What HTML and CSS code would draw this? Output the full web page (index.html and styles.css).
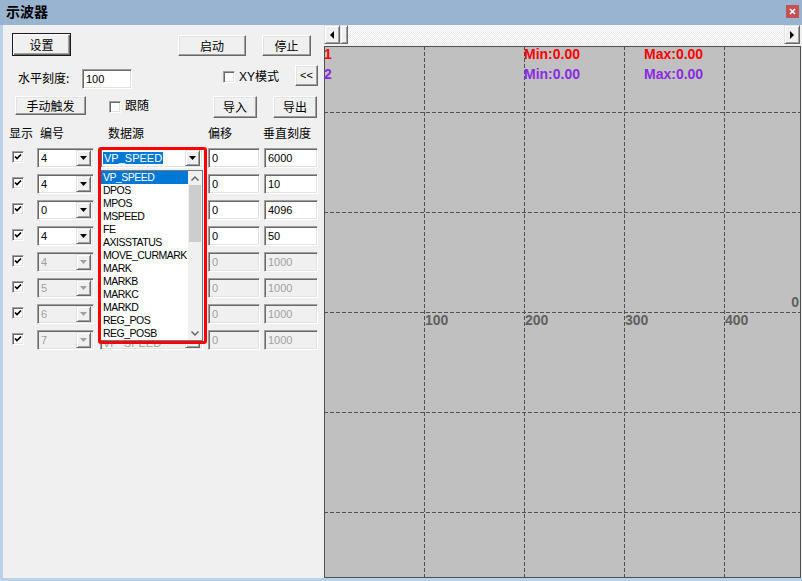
FILE: index.html
```html
<!DOCTYPE html>
<html lang="zh">
<head>
    <meta charset="UTF-8">
    <title>示波器</title>
    <link rel="stylesheet" href="styles.css">
</head>
<body>
<div class="window">
    <div class="titlebar">
        <span class="title">示波器</span>
        <span class="close">
            <svg width="7" height="7" viewBox="0 0 7 7"><path d="M1 1L6 6M6 1L1 6" stroke="#fff" stroke-width="1.6"/></svg>
        </span>
    </div>

    <div class="frame">
        <!-- settings panel -->
        <div class="panel">
            <div class="row-top">
                <button class="btn btn-default btn-set">设置</button>
                <button class="btn btn-start">启动</button>
                <button class="btn btn-stop">停止</button>
            </div>

            <div class="row-scale">
                <span class="lbl-scale">水平刻度:</span>
                <div class="field field-scale">100</div>
                <span class="check check-xy"></span>
                <span class="check-label">XY模式</span>
                <button class="btn btn-back">&lt;&lt;</button>
            </div>

            <div class="row-ctl">
                <button class="btn btn-trigger">手动触发</button>
                <span class="check check-follow"></span>
                <span class="check-label follow-label">跟随</span>
                <button class="btn btn-import">导入</button>
                <button class="btn btn-export">导出</button>
            </div>

            <div class="col-head">
                <span class="h-show">显示</span>
                <span class="h-num">编号</span>
                <span class="h-src">数据源</span>
                <span class="h-off">偏移</span>
                <span>垂直刻度</span>
            </div>

            <div class="channels">
                <div class="channel">
                    <span class="check"><svg viewBox="0 0 8 8"><polyline points="1,3.5 3,5.5 7,1.5"/></svg></span>
                    <div class="combo combo-num"><span class="combo-text">4</span><span class="combo-btn"><svg viewBox="0 0 7 4"><polygon points="0,0 7,0 3.5,4"/></svg></span></div>
                    <div class="combo combo-src"><span class="combo-text"><span class="sel">VP_SPEED</span></span><span class="combo-btn"><svg viewBox="0 0 7 4"><polygon points="0,0 7,0 3.5,4"/></svg></span></div>
                    <div class="field field-off">0</div>
                    <div class="field field-vs">6000</div>
                </div>
                <div class="channel">
                    <span class="check"><svg viewBox="0 0 8 8"><polyline points="1,3.5 3,5.5 7,1.5"/></svg></span>
                    <div class="combo combo-num"><span class="combo-text">4</span><span class="combo-btn"><svg viewBox="0 0 7 4"><polygon points="0,0 7,0 3.5,4"/></svg></span></div>
                    <div class="combo combo-src"><span class="combo-text"></span><span class="combo-btn"><svg viewBox="0 0 7 4"><polygon points="0,0 7,0 3.5,4"/></svg></span></div>
                    <div class="field field-off">0</div>
                    <div class="field field-vs">10</div>
                </div>
                <div class="channel">
                    <span class="check"><svg viewBox="0 0 8 8"><polyline points="1,3.5 3,5.5 7,1.5"/></svg></span>
                    <div class="combo combo-num"><span class="combo-text">0</span><span class="combo-btn"><svg viewBox="0 0 7 4"><polygon points="0,0 7,0 3.5,4"/></svg></span></div>
                    <div class="combo combo-src"><span class="combo-text"></span><span class="combo-btn"><svg viewBox="0 0 7 4"><polygon points="0,0 7,0 3.5,4"/></svg></span></div>
                    <div class="field field-off">0</div>
                    <div class="field field-vs">4096</div>
                </div>
                <div class="channel">
                    <span class="check"><svg viewBox="0 0 8 8"><polyline points="1,3.5 3,5.5 7,1.5"/></svg></span>
                    <div class="combo combo-num"><span class="combo-text">4</span><span class="combo-btn"><svg viewBox="0 0 7 4"><polygon points="0,0 7,0 3.5,4"/></svg></span></div>
                    <div class="combo combo-src"><span class="combo-text"></span><span class="combo-btn"><svg viewBox="0 0 7 4"><polygon points="0,0 7,0 3.5,4"/></svg></span></div>
                    <div class="field field-off">0</div>
                    <div class="field field-vs">50</div>
                </div>
                <div class="channel is-off">
                    <span class="check"><svg viewBox="0 0 8 8"><polyline points="1,3.5 3,5.5 7,1.5"/></svg></span>
                    <div class="combo combo-num"><span class="combo-text">4</span><span class="combo-btn"><svg viewBox="0 0 7 4"><polygon points="0,0 7,0 3.5,4"/></svg></span></div>
                    <div class="combo combo-src"><span class="combo-text"></span><span class="combo-btn"><svg viewBox="0 0 7 4"><polygon points="0,0 7,0 3.5,4"/></svg></span></div>
                    <div class="field field-off">0</div>
                    <div class="field field-vs">1000</div>
                </div>
                <div class="channel is-off">
                    <span class="check"><svg viewBox="0 0 8 8"><polyline points="1,3.5 3,5.5 7,1.5"/></svg></span>
                    <div class="combo combo-num"><span class="combo-text">5</span><span class="combo-btn"><svg viewBox="0 0 7 4"><polygon points="0,0 7,0 3.5,4"/></svg></span></div>
                    <div class="combo combo-src"><span class="combo-text"></span><span class="combo-btn"><svg viewBox="0 0 7 4"><polygon points="0,0 7,0 3.5,4"/></svg></span></div>
                    <div class="field field-off">0</div>
                    <div class="field field-vs">1000</div>
                </div>
                <div class="channel is-off">
                    <span class="check"><svg viewBox="0 0 8 8"><polyline points="1,3.5 3,5.5 7,1.5"/></svg></span>
                    <div class="combo combo-num"><span class="combo-text">6</span><span class="combo-btn"><svg viewBox="0 0 7 4"><polygon points="0,0 7,0 3.5,4"/></svg></span></div>
                    <div class="combo combo-src"><span class="combo-text"></span><span class="combo-btn"><svg viewBox="0 0 7 4"><polygon points="0,0 7,0 3.5,4"/></svg></span></div>
                    <div class="field field-off">0</div>
                    <div class="field field-vs">1000</div>
                </div>
                <div class="channel is-off">
                    <span class="check"><svg viewBox="0 0 8 8"><polyline points="1,3.5 3,5.5 7,1.5"/></svg></span>
                    <div class="combo combo-num"><span class="combo-text">7</span><span class="combo-btn"><svg viewBox="0 0 7 4"><polygon points="0,0 7,0 3.5,4"/></svg></span></div>
                    <div class="combo combo-src"><span class="combo-text peek">VP_SPEED</span><span class="combo-btn"><svg viewBox="0 0 7 4"><polygon points="0,0 7,0 3.5,4"/></svg></span></div>
                    <div class="field field-off">0</div>
                    <div class="field field-vs">1000</div>
                </div>
            </div>

            <!-- open dropdown of channel 1 -->
            <div class="droplist">
                <ul class="drop-items">
                    <li class="picked">VP_SPEED</li>
                    <li>DPOS</li>
                    <li>MPOS</li>
                    <li>MSPEED</li>
                    <li>FE</li>
                    <li>AXISSTATUS</li>
                    <li>MOVE_CURMARK</li>
                    <li>MARK</li>
                    <li>MARKB</li>
                    <li>MARKC</li>
                    <li>MARKD</li>
                    <li>REG_POS</li>
                    <li>REG_POSB</li>
                </ul>
                <div class="drop-scroll">
                    <span class="ds-arrow"><svg width="8" height="5" viewBox="0 0 8 5"><polyline points="0.5,4.5 4,1 7.5,4.5"/></svg></span>
                    <span class="ds-thumb"></span>
                    <span class="ds-track"></span>
                    <span class="ds-arrow"><svg width="8" height="5" viewBox="0 0 8 5"><polyline points="0.5,0.5 4,4 7.5,0.5"/></svg></span>
                </div>
            </div>
            <div class="callout"></div>
        </div>

        <!-- scope view -->
        <div class="scope">
            <div class="hscroll">
                <span class="sb-btn"><svg width="4" height="8" viewBox="0 0 4 8"><polygon points="4,0 4,8 0,4"/></svg></span>
                <span class="sb-thumb"></span>
                <span class="sb-track"></span>
                <span class="sb-btn"><svg width="4" height="8" viewBox="0 0 4 8"><polygon points="0,0 0,8 4,4"/></svg></span>
            </div>
            <svg class="plot" width="477" height="532" viewBox="0 0 477 532">
                <rect x="0" y="0" width="477" height="532" fill="#c0c0c0"/>
                <g class="grid">
                    <line x1="100.5" y1="0" x2="100.5" y2="532"/>
                    <line x1="200.5" y1="0" x2="200.5" y2="532"/>
                    <line x1="300.5" y1="0" x2="300.5" y2="532"/>
                    <line x1="400.5" y1="0" x2="400.5" y2="532"/>
                    <line x1="0" y1="66.5" x2="477" y2="66.5"/>
                    <line x1="0" y1="166.5" x2="477" y2="166.5"/>
                    <line x1="0" y1="266.5" x2="477" y2="266.5"/>
                    <line x1="0" y1="366.5" x2="477" y2="366.5"/>
                    <line x1="0" y1="466.5" x2="477" y2="466.5"/>
                </g>
                <rect class="plot-frame" x="0.5" y="0.5" width="476" height="531"/>
                <g class="legend">
                    <text x="0" y="13" fill="#ff0000">1</text>
                    <text x="200" y="13" fill="#ff0000">Min:0.00</text>
                    <text x="320" y="13" fill="#ff0000">Max:0.00</text>
                    <text x="0" y="33" fill="#8a2be2">2</text>
                    <text x="200" y="33" fill="#8a2be2">Min:0.00</text>
                    <text x="320" y="33" fill="#8a2be2">Max:0.00</text>
                </g>
                <g class="axis">
                    <text x="101" y="279">100</text>
                    <text x="201" y="279">200</text>
                    <text x="301" y="279">300</text>
                    <text x="401" y="279">400</text>
                    <text x="475" y="261" text-anchor="end">0</text>
                </g>
            </svg>
        </div>
    </div>
</div>
</body>
</html>
```

FILE: styles.css
```css
* { box-sizing: border-box; }

body {
    margin: 0;
    font-family: "Liberation Sans", "Noto Sans CJK SC", sans-serif;
    font-size: 12px;
    color: #000;
    background: #b9d1ea;
}

.window {
    width: 802px;
    height: 581px;
    background: #b9d1ea;
    overflow: hidden;
}

/* title bar */
.titlebar {
    height: 25px;
    background: #99b4d1;
    display: flex;
    justify-content: space-between;
    align-items: flex-start;
}
.title {
    padding-left: 6px;
    font-family: "Noto Sans CJK SC", sans-serif;
    font-size: 14px;
    font-weight: bold;
    line-height: 22px;
}
.close {
    width: 13px;
    height: 13px;
    margin: 5px 3px 0 0;
    background: #c75050;
    display: flex;
    align-items: center;
    justify-content: center;
}

.frame {
    display: flex;
    height: 553px;
    margin-left: 3px;
}

/* left panel */
.panel {
    position: relative;
    width: 321px;
    background: #f0f0f0;
}

.btn {
    padding: 0;
    font-family: "Noto Sans CJK SC", "Liberation Sans", sans-serif;
    font-size: 12px;
    line-height: 1;
    color: #000;
    background: #f0f0f0;
    border: 1px solid;
    border-color: #fff #696969 #696969 #fff;
    box-shadow: inset -1px -1px #a0a0a0, inset 1px 1px #e3e3e3;
    display: flex;
    align-items: center;
    justify-content: center;
}
.btn-default {
    border-color: #1a1a1a;
    box-shadow: inset 1px 1px #fff, inset -1px -1px #696969, inset -2px -2px #a0a0a0;
}

.row-top {
    display: flex;
    align-items: flex-end;
    height: 23px;
    margin-top: 8px;
}
.btn-set { width: 59px; height: 23px; margin-left: 9px; }
.btn-start { width: 68px; height: 21px; margin-left: 107px; }
.btn-stop { width: 49px; height: 21px; margin-left: 16px; }

.row-scale {
    display: flex;
    align-items: flex-start;
    height: 25px;
    margin-top: 9px;
}
.lbl-scale {
    width: 64px;
    margin: 5px 0 0 15px;
    line-height: 16px;
    font-family: "Noto Sans CJK SC", sans-serif;
}
.field-scale { width: 50px; height: 21px; margin-top: 4px; }
.check-xy { margin: 6px 0 0 91px; }
.check-label {
    margin: 4px 0 0 4px;
    line-height: 16px;
    font-family: "Liberation Sans", "Noto Sans CJK SC", sans-serif;
}
.btn-back {
    width: 23px;
    height: 21px;
    margin: 0 6px 0 auto;
    font-family: "Liberation Sans", sans-serif;
    font-size: 11px;
}

.row-ctl {
    display: flex;
    align-items: flex-start;
    height: 22px;
    margin-top: 6px;
}
.btn-trigger { width: 71px; height: 19px; margin-left: 12px; }
.check-follow { margin: 5px 0 0 23px; }
.follow-label { margin-top: 2px; }
.btn-import { width: 44px; height: 22px; margin-left: auto; }
.btn-export { width: 44px; height: 22px; margin: 0 7px 0 16px; }

.col-head {
    display: flex;
    height: 18px;
    margin: 6px 0;
    padding-left: 6px;
    line-height: 18px;
    font-family: "Noto Sans CJK SC", sans-serif;
}
.h-show { width: 31px; }
.h-num { width: 68px; }
.h-src { width: 100px; }
.h-off { width: 55px; }

/* channel rows */
.channels {
    display: flex;
    flex-direction: column;
    gap: 6px;
}
.channel {
    display: flex;
    align-items: flex-start;
    height: 20px;
    font-size: 11px;
}
.channel .check { margin: 3px 0 0 9px; }

.check {
    width: 12px;
    height: 12px;
    flex-shrink: 0;
    background: #fff;
    border: 1px solid;
    border-color: #a0a0a0 #fff #fff #a0a0a0;
    box-shadow: inset 1px 1px #696969, inset -1px -1px #e3e3e3;
    display: flex;
    align-items: center;
    justify-content: center;
}
.check svg {
    width: 8px;
    height: 8px;
    fill: none;
    stroke: #000;
    stroke-width: 1.7;
}

.field, .combo {
    height: 20px;
    background: #fff;
    border: 1px solid;
    border-color: #a0a0a0 #fff #fff #a0a0a0;
    box-shadow: inset 1px 1px #696969, inset -1px -1px #e3e3e3;
    font-size: 11px;
}
.field {
    padding: 1px 0 0 3px;
    line-height: 17px;
}
.combo {
    display: flex;
    padding: 2px;
}
.combo-text {
    flex: 1;
    padding-left: 1px;
    line-height: 15px;
    white-space: nowrap;
    overflow: hidden;
}
.combo-text.peek { padding-top: 3px; }
.combo-btn {
    width: 15px;
    height: 16px;
    margin-top: -1px;
    background: #f0f0f0;
    border: 1px solid;
    border-color: #e3e3e3 #696969 #696969 #e3e3e3;
    box-shadow: inset 1px 1px #fff, inset -1px -1px #a0a0a0;
    display: flex;
    align-items: center;
    justify-content: center;
}
.combo-btn svg { width: 7px; height: 4px; fill: #000; }

.combo-num { width: 57px; margin-left: 13px; }
.combo-src { width: 103px; margin-left: 6px; }
.combo-src .combo-text { padding-left: 0; }
.field-off { width: 52px; margin-left: 5px; }
.field-vs { width: 54px; margin-left: 4px; }

.sel {
    background: #0078d7;
    color: #fff;
    padding: 0 1px;
}

.is-off .field, .is-off .combo { background: #f0f0f0; color: #a0a0a0; }
.is-off .combo-btn svg { fill: #a0a0a0; }

/* open list */
.droplist {
    position: absolute;
    left: 97px;
    top: 145px;
    width: 103px;
    height: 171px;
    display: flex;
    background: #fff;
    border: 1px solid #7a7a7a;
}
.drop-items {
    width: 87px;
    margin: 0;
    padding: 0;
    list-style: none;
    font-size: 10.5px;
}
.drop-items li {
    height: 13px;
    line-height: 13px;
    padding-left: 2px;
    white-space: nowrap;
    letter-spacing: -0.5px;
}
.drop-items .picked { background: #0078d7; color: #fff; }
.drop-scroll {
    width: 14px;
    display: flex;
    flex-direction: column;
    background: #f0f0f0;
}
.ds-arrow {
    height: 14px;
    display: flex;
    align-items: center;
    justify-content: center;
}
.ds-arrow svg { fill: none; stroke: #606060; stroke-width: 1.4; }
.ds-thumb { height: 57px; margin: 0 1px; background: #cdcdcd; }
.ds-track { flex: 1; }

.callout {
    position: absolute;
    left: 95px;
    top: 122px;
    width: 109px;
    height: 197px;
    border: 3px solid #ff0000;
    border-radius: 3px;
}

/* scope */
.scope {
    width: 478px;
    background: #f0f0f0;
}
.hscroll {
    display: flex;
    width: 476px;
    height: 19px;
    margin-bottom: 2px;
}
.sb-btn, .sb-thumb {
    height: 19px;
    background: #f0f0f0;
    border: 1px solid;
    border-color: #e3e3e3 #696969 #696969 #e3e3e3;
    box-shadow: inset 1px 1px #fff, inset -1px -1px #a0a0a0;
}
.sb-btn {
    width: 16px;
    display: flex;
    align-items: center;
    justify-content: center;
}
.sb-btn svg { fill: #000; }
.sb-thumb { width: 8px; }
.sb-track {
    flex: 1;
    background: repeating-conic-gradient(#fff 0 25%, #ebebeb 0 50%) 0 0 / 2px 2px;
}

.plot { display: block; }
.grid line {
    stroke: #505050;
    stroke-width: 1;
    stroke-dasharray: 4 2;
}
.plot-frame { fill: none; stroke: #505050; stroke-width: 1; }
.legend text, .axis text {
    font-family: "Liberation Sans", sans-serif;
    font-size: 14px;
    font-weight: bold;
}
.axis text { fill: #606060; }
```
